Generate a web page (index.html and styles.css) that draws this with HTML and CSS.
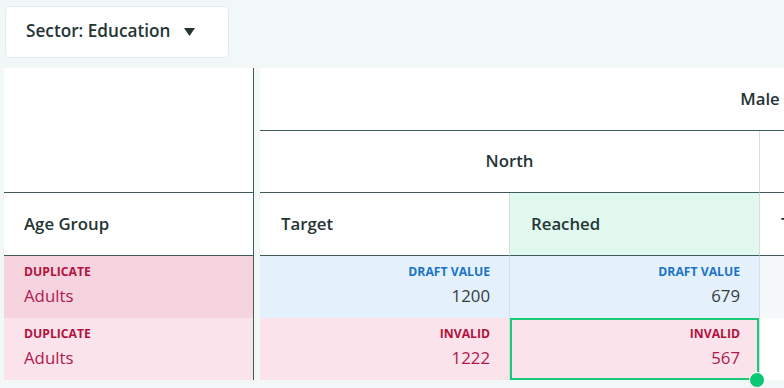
FILE: index.html
```html
<!DOCTYPE html>
<html>
<head>
<meta charset="utf-8">
<link rel="stylesheet" href="styles.css">
</head>
<body>
<div class="page">
  <div class="toolbar">
    <button class="sector-btn">
      <span>Sector: Education</span>
      <svg class="caret" width="11" height="8" viewBox="0 0 11 8"><path d="M0 0H11L5.5 8Z" fill="#253535"/></svg>
    </button>
  </div>
  <div class="table">
    <div class="frozen">
      <div class="cell corner"></div>
      <div class="cell head">Age Group</div>
      <div class="cell row-dup-a">
        <span class="tag">DUPLICATE</span>
        <span class="txt">Adults</span>
      </div>
      <div class="cell row-dup-b">
        <span class="tag">DUPLICATE</span>
        <span class="txt">Adults</span>
      </div>
    </div>
    <div class="scroller">
      <div class="grid">
        <div class="cell h1 span4">Male</div>
        <div class="cell h2 span2 vline">North</div>
        <div class="cell h2 span2 vline">South</div>
        <div class="cell h3 vline">Target</div>
        <div class="cell h3 vline reached">Reached</div>
        <div class="cell h3 vline">Target</div>
        <div class="cell h3 vline">Reached</div>

        <div class="cell val draft vline"><span class="tag blue">DRAFT VALUE</span><span class="num">1200</span></div>
        <div class="cell val draft vline"><span class="tag blue">DRAFT VALUE</span><span class="num">679</span></div>
        <div class="cell val empty vline"></div>
        <div class="cell val empty vline"></div>

        <div class="cell val invalid vline"><span class="tag">INVALID</span><span class="num red">1222</span></div>
        <div class="cell val invalid vline selected"><span class="tag">INVALID</span><span class="num red">567</span><span class="handle"></span></div>
        <div class="cell val blank vline"></div>
        <div class="cell val blank vline"></div>
      </div>
    </div>
  </div>
</div>
</body>
</html>
```

FILE: styles.css
```css
* { box-sizing: border-box; }
html, body {
  margin: 0;
  padding: 0;
  background: #f2f7f7;
  font-family: "Open Sans", "Noto Sans", sans-serif;
  color: #253535;
  overflow: hidden;
}
.page {
  width: 784px;
  height: 388px;
  padding: 6px 0 0 4px;
  overflow: hidden;
}
.toolbar {
  display: flex;
  height: 62px;
  align-items: flex-start;
}
.sector-btn {
  margin-left: 1px;
  width: 224px;
  height: 52px;
  background: #fff;
  border: 1px solid #e4ebeb;
  border-radius: 5px;
  display: flex;
  align-items: center;
  gap: 14px;
  padding: 0 0 3px 20px;
  font-family: inherit;
  font-size: 17.2px;
  font-weight: 600;
  color: #253535;
}
.caret { display: block; margin-top: 2px; }

.table {
  display: flex;
  gap: 6px;
  align-items: flex-start;
}
.frozen {
  width: 250px;
  flex: none;
  background: #fff;
  border-right: 1px solid #3f5a5a;
  display: grid;
  grid-template-rows: 125px 63px 62px 62px;
}
.scroller {
  flex: 1;
  min-width: 0;
  overflow: hidden;
  padding-bottom: 10px;
}
.grid {
  display: grid;
  grid-template-columns: repeat(4, 250px);
  grid-template-rows: 63px 62px 63px 62px 62px;
  width: 1000px;
  background: #fff;
}
.cell {
  position: relative;
  display: flex;
  align-items: center;
  padding: 0 20px 2px;
  font-size: 16.8px;
  font-weight: 600;
}
.corner { border-bottom: 1px solid #3f5a5a; }
.head { border-bottom: 1px solid #3f5a5a; padding-left: 20px; }
.span4 { grid-column: span 4; justify-content: center; border-bottom: 1px solid #3f5a5a; }
.span2 { grid-column: span 2; justify-content: center; }
.h2, .h3 { border-bottom: 1px solid #3f5a5a; }
.h3 { padding-left: 21px; }
.vline { border-right: 1px solid #d3e0df; }
.reached { background: #e0f8ee; }

.row-dup-a, .row-dup-b {
  flex-direction: column;
  align-items: flex-start;
  justify-content: flex-start;
  padding-top: 9px;
}
.row-dup-a { background: #f5d4e0; }
.row-dup-b { background: #fae3ea; }

.tag {
  display: block;
  font-size: 12.2px;
  font-weight: 700;
  line-height: 14px;
  color: #b3123f;
}
.tag.blue { color: #1b73c8; }
.txt {
  display: block;
  margin-top: 6px;
  font-size: 16.8px;
  font-weight: 400;
  line-height: 22px;
  color: #b1184b;
}

.val {
  flex-direction: column;
  align-items: flex-end;
  justify-content: flex-start;
  padding: 9px 19px 0 0;
}
.num {
  display: block;
  margin-top: 6px;
  font-size: 16.8px;
  font-weight: 400;
  line-height: 22px;
  color: #333d3d;
}
.num.red { color: #b1184b; }
.draft { background: #e4f1fc; }
.empty { background: #f4f8f8; }
.invalid { background: #fae3ea; }
.blank { background: #fff; }
.selected {
  box-shadow: inset 0 0 0 2px #19c878;
}
.handle {
  position: absolute;
  right: -6px;
  bottom: -8px;
  width: 16px;
  height: 16px;
  border-radius: 50%;
  background: #0cc774;
  border: 1px solid #fff;
  z-index: 2;
}
```
